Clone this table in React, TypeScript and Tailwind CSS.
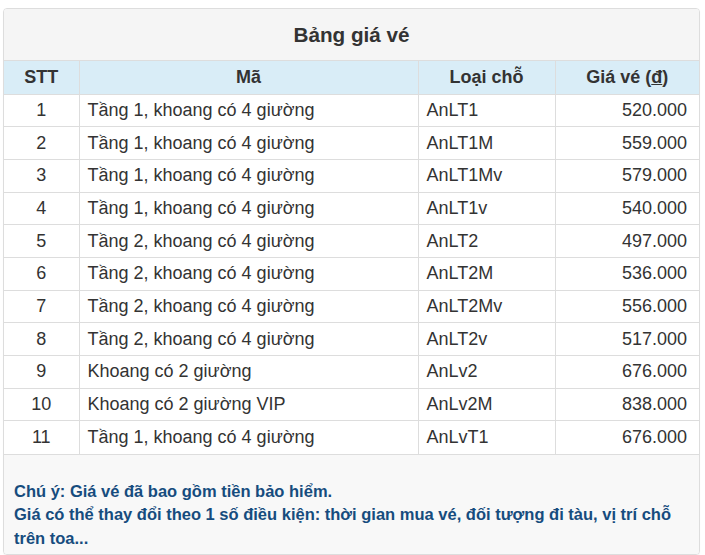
const rows: [string, string, string][] = [
  ['Tầng 1, khoang có 4 giường', 'AnLT1', '520.000'],
  ['Tầng 1, khoang có 4 giường', 'AnLT1M', '559.000'],
  ['Tầng 1, khoang có 4 giường', 'AnLT1Mv', '579.000'],
  ['Tầng 1, khoang có 4 giường', 'AnLT1v', '540.000'],
  ['Tầng 2, khoang có 4 giường', 'AnLT2', '497.000'],
  ['Tầng 2, khoang có 4 giường', 'AnLT2M', '536.000'],
  ['Tầng 2, khoang có 4 giường', 'AnLT2Mv', '556.000'],
  ['Tầng 2, khoang có 4 giường', 'AnLT2v', '517.000'],
  ['Khoang có 2 giường', 'AnLv2', '676.000'],
  ['Khoang có 2 giường VIP', 'AnLv2M', '838.000'],
  ['Tầng 1, khoang có 4 giường', 'AnLvT1', '676.000'],
];

export default function App() {
  return (
    <div className="bg-white pt-[8px] pl-[3px] pr-[5px] h-[555px]" style={{ fontFamily: '"Liberation Sans", Arial, sans-serif' }}>
      <div className="border border-[#ddd] rounded-[4px] overflow-hidden shadow-[0_1px_1px_rgba(0,0,0,0.05)] text-[#333]">
        <div className="bg-[#f5f5f5] border-b border-[#ddd] h-[52px] flex items-center justify-center">
          <h3 className="text-[20.7px] font-bold">Bảng giá vé</h3>
        </div>
        <table className="w-full border-collapse text-[18px]">
          <thead>
            <tr className="bg-[#d9edf7] h-[33px]">
              <th className="w-[75px] border-r border-[#ddd] font-bold">STT</th>
              <th className="w-[339px] border-r border-[#ddd] font-bold">Mã</th>
              <th className="w-[137px] border-r border-[#ddd] font-bold">Loại chỗ</th>
              <th className="font-bold">
                Giá vé (<span className="underline">đ</span>)
              </th>
            </tr>
          </thead>
          <tbody>
            {rows.map((r, i) => (
              <tr key={i} className="h-[32.7px] border-t border-[#ddd]">
                <td className="text-center border-r border-[#ddd]">{i + 1}</td>
                <td className="px-[8px] border-r border-[#ddd]">{r[0]}</td>
                <td className="px-[8px] border-r border-[#ddd]">{r[1]}</td>
                <td className="text-right pr-[12px]">{r[2]}</td>
              </tr>
            ))}
          </tbody>
        </table>
        <div className="bg-[#f8f8f8] border-t border-[#ddd] h-[100px] pt-[25px] px-[10px] text-[16.5px] leading-[23.5px] font-bold text-[#164c7e]">
          Chú ý: Giá vé đã bao gồm tiền bảo hiểm.
          <br />
          Giá có thể thay đổi theo 1 số điều kiện: thời gian mua vé, đối tượng đi tàu, vị trí chỗ trên toa...
        </div>
      </div>
    </div>
  );
}
